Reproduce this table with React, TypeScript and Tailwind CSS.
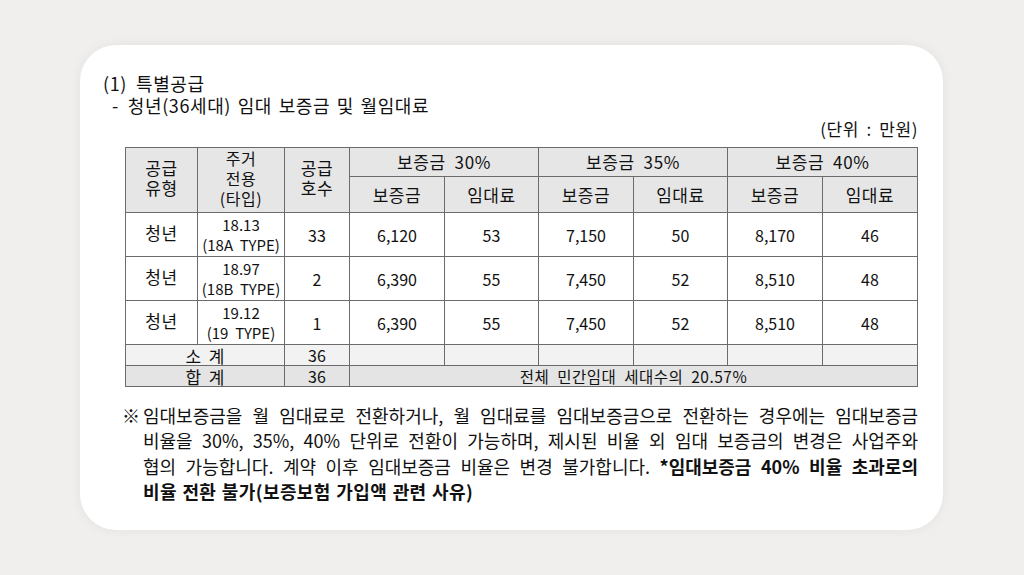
import React from "react";

const font = { fontFamily: '"Noto Sans CJK KR", "Noto Sans", sans-serif' };

const rows = [
  { type: "청년", area: "18.13", tp: "(18A  TYPE)", n: "33", v: ["6,120", "53", "7,150", "50", "8,170", "46"] },
  { type: "청년", area: "18.97", tp: "(18B  TYPE)", n: "2", v: ["6,390", "55", "7,450", "52", "8,510", "48"] },
  { type: "청년", area: "19.12", tp: "(19  TYPE)", n: "1", v: ["6,390", "55", "7,450", "52", "8,510", "48"] },
];

const widths = [72, 87, 65, 95, 94, 95, 94, 95, 95];

const cell = "border border-[#6b6b6b] text-center align-middle p-0 whitespace-pre";

export default function App() {
  return (
    <div className="min-h-screen w-full bg-[#f0efee] pt-[45px] pl-[80px] text-[#111]" style={font}>
      <div className="w-[863px] h-[485px] rounded-[36px] bg-white shadow-[0_0_12px_rgba(0,0,0,0.06)] pt-[27px]">
        {/* heading */}
        <div className="pl-[23px] text-[18px] leading-[22px] tracking-[0.6px]">
          <p>
            (1)<span className="inline-block w-[9px]" />특별공급
          </p>
          <p className="pl-[9px] [word-spacing:2px]">
            -<span className="inline-block w-[9px]" />청년(36세대) 임대 보증금 및 월임대료
          </p>
        </div>
        <div className="w-[838px] text-right text-[17px] leading-[24px] mt-[1px] tracking-[0.6px] [word-spacing:3px]">
          (단위 : 만원)
        </div>

        {/* table */}
        <div className="pl-[45px] mt-[6px]">
          <table className="border-collapse border-[1.5px] border-[#444] text-[16px] table-fixed w-[792px]">
            <colgroup>
              {widths.map((w, i) => (
                <col key={i} style={{ width: w }} />
              ))}
            </colgroup>
            <tbody>
              <tr className="h-[29px] bg-[#e6e6e6] tracking-[0.6px]">
                <td rowSpan={2} className={`${cell} leading-[20px] text-[17px] pb-[4px]`}>
                  공급
                  <br />
                  유형
                </td>
                <td rowSpan={2} className={`${cell} leading-[20px] text-[16px] align-top`}>
                  주거
                  <br />
                  전용
                  <br />
                  (타입)
                </td>
                <td rowSpan={2} className={`${cell} leading-[20px] text-[17px] pb-[4px]`}>
                  공급
                  <br />
                  호수
                </td>
                <td colSpan={2} className={`${cell} text-[17px]`}>보증금  30%</td>
                <td colSpan={2} className={`${cell} text-[17px]`}>보증금  35%</td>
                <td colSpan={2} className={`${cell} text-[17px]`}>보증금  40%</td>
              </tr>
              <tr className="h-[36px] bg-[#e6e6e6] text-[17px] tracking-[0.6px]">
                {["보증금", "임대료", "보증금", "임대료", "보증금", "임대료"].map((t, i) => (
                  <td key={i} className={cell}>
                    {t}
                  </td>
                ))}
              </tr>
              {rows.map((r, i) => (
                <tr key={i} className="h-[44px]">
                  <td className={`${cell} text-[17px] tracking-[0.6px] pb-[4px]`}>{r.type}</td>
                  <td className={`${cell} leading-[20px] text-[15px]`}>
                    {r.area}
                    <br />
                    {r.tp}
                  </td>
                  <td className={cell}>{r.n}</td>
                  {r.v.map((v, j) => (
                    <td key={j} className={cell}>
                      {v}
                    </td>
                  ))}
                </tr>
              ))}
              <tr className="h-[21px] bg-[#f2f2f2] leading-[19px]">
                <td colSpan={2} className={`${cell} text-[17px]`}>소  계</td>
                <td className={cell}>36</td>
                {[0, 1, 2, 3, 4, 5].map((j) => (
                  <td key={j} className={cell}></td>
                ))}
              </tr>
              <tr className="h-[21px] bg-[#e4e4e4] leading-[19px]">
                <td colSpan={2} className={`${cell} text-[17px]`}>합  계</td>
                <td className={cell}>36</td>
                <td colSpan={6} className={`${cell} text-[15.5px] tracking-[0.5px]`}>
                  전체  민간임대  세대수의  20.57%
                </td>
              </tr>
            </tbody>
          </table>
        </div>

        {/* note */}
        <div className="flex pl-[42px] mt-[16px] text-[18px] leading-[25.3px]">
          <span className="w-[21px] shrink-0">※</span>
          <div className="w-[775px]">
            <p className="text-justify [text-align-last:justify]">
              임대보증금을 월 임대료로 전환하거나, 월 임대료를 임대보증금으로 전환하는 경우에는 임대보증금
            </p>
            <p className="text-justify [text-align-last:justify]">
              비율을 30%, 35%, 40% 단위로 전환이 가능하며, 제시된 비율 외 임대 보증금의 변경은 사업주와
            </p>
            <p className="text-justify [text-align-last:justify]">
              협의 가능합니다. 계약 이후 임대보증금 비율은 변경 불가합니다. <b>*임대보증금 40% 비율 초과로의</b>
            </p>
            <p className="font-bold tracking-[0.4px] [word-spacing:1px]">비율 전환 불가(보증보험 가입액 관련 사유)</p>
          </div>
        </div>
      </div>
    </div>
  );
}
